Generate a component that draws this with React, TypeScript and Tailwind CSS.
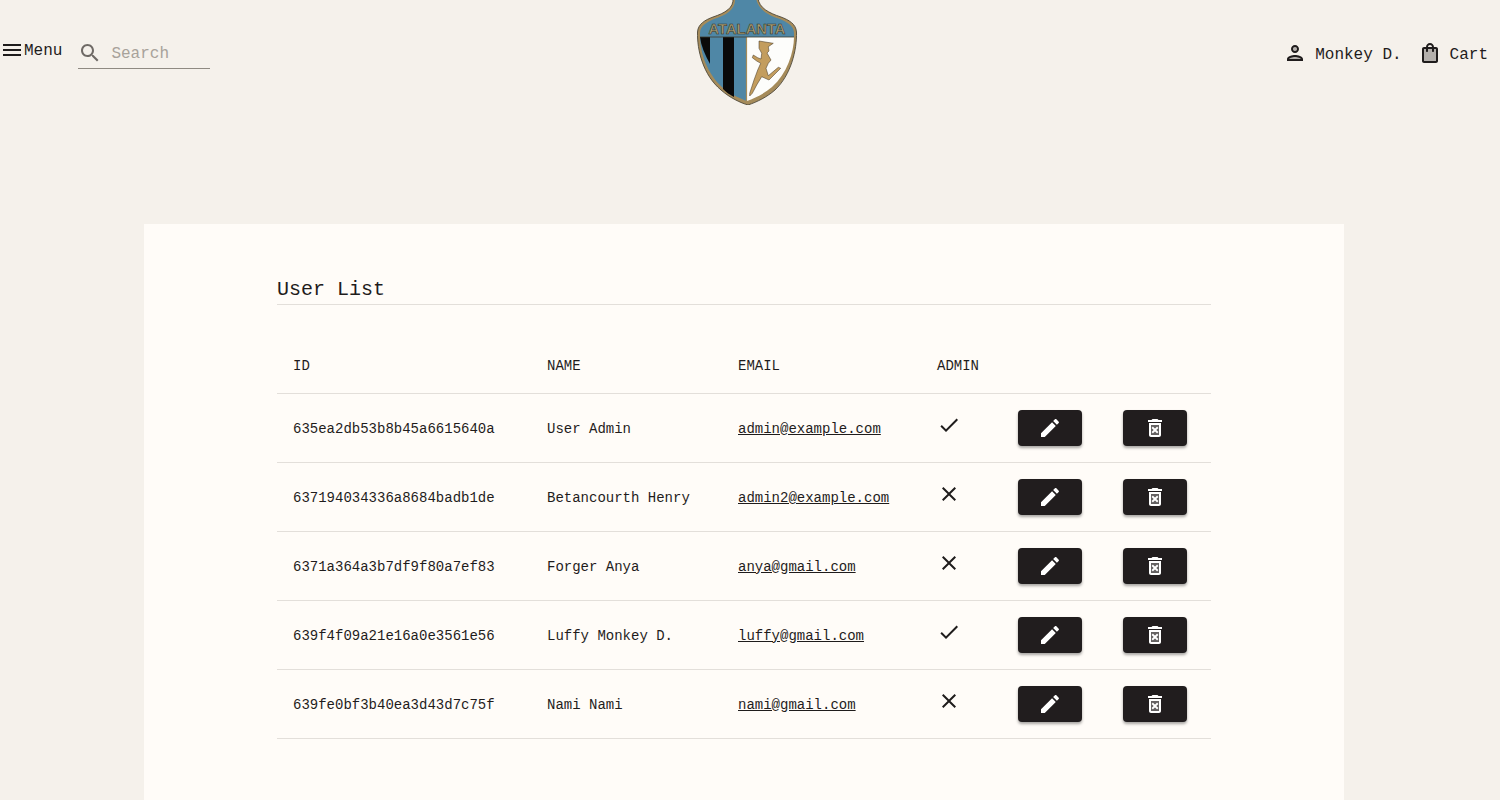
import React from 'react';

const font = 'font-["Liberation_Mono",monospace]';

const users = [
  { id: '635ea2db53b8b45a6615640a', name: 'User Admin', email: 'admin@example.com', admin: true },
  { id: '637194034336a8684badb1de', name: 'Betancourth Henry', email: 'admin2@example.com', admin: false },
  { id: '6371a364a3b7df9f80a7ef83', name: 'Forger Anya', email: 'anya@gmail.com', admin: false },
  { id: '639f4f09a21e16a0e3561e56', name: 'Luffy Monkey D.', email: 'luffy@gmail.com', admin: true },
  { id: '639fe0bf3b40ea3d43d7c75f', name: 'Nami Nami', email: 'nami@gmail.com', admin: false },
];

const Icon = ({ children, className }: { children: React.ReactNode; className?: string }) => (
  <svg viewBox="0 0 24 24" fill="currentColor" className={`w-6 h-6 shrink-0 block ${className ?? ''}`}>
    {children}
  </svg>
);

const Logo = () => (
  <svg viewBox="0 0 106 105" className="w-[106px] h-[105px] block">
    <path
      d="M36 -2C37 8 28 13 16 17C8 20 1 24 0.5 32C0 50 6 75 24 90C33 98 44 103 51 105C60 102 70 97 78 90C94 75 100 50 99.5 32C99 24 92 20 84 17C72 13 62 8 61 -2Z"
      fill="#a58b5a"
      stroke="#3f3a2c"
      strokeWidth="0.8"
    />
    <path
      d="M38 -2C39 9 30 15 17 19C10 22 3 26 3 33L3 37L97 37L97 33C97 26 90 22 83 19C70 15 61 9 59 -2Z"
      fill="#4f87a6"
    />
    <path d="M3 37H50V101C44 99 35 95 26 88C10 74 3 52 3 37Z" fill="#4f87a6" />
    <path d="M3 37H13V64C8 55 4 46 3 37Z" fill="#0a0a0a" />
    <path d="M26 37H37V97C33 95 29 92 26 89Z" fill="#0a0a0a" />
    <path d="M50 37H97C97 52 90 74 75 87C67 94 58 98 50 101Z" fill="#fdfdfb" />
    <path d="M49.5 37V102" stroke="#a58b5a" strokeWidth="1.2" />
    <path d="M3 37H97" stroke="#3f3a2c" strokeWidth="0.8" />
    <text
      x="50"
      y="33.5"
      textAnchor="middle"
      textLength="77"
      lengthAdjust="spacingAndGlyphs"
      fontSize="14"
      fontWeight="700"
      fontFamily="Liberation Sans, sans-serif"
      fill="#a89c72"
      stroke="#2e2e22"
      strokeWidth="0.5"
    >
      ATALANTA
    </text>
    <path
      d="M62 41L76.3 43.3L71.3 46.7L72 51L70 53L74 60L71.3 63.3L69 68.3L71.3 75.7L81.3 67.3L83.7 68.3L72 80L64.7 76.7L59.7 85L55.3 93.3L52.7 96L52.7 93.3L57 80L60.7 70L63.7 63.3L59.7 61L55.3 57.7L56.3 55L60.7 57.7L64 59L64.7 53.3L62 48.3Z"
      fill="#c39d5e"
      stroke="#3a2f1c"
      strokeWidth="0.5"
      strokeLinejoin="round"
    />
  </svg>
);

const borderCls = 'text-left text-sm font-normal border-b border-[#e3dfda]';
const headCls = `pl-4 pr-4 pt-[20px] pb-[16px] ${borderCls}`;
const textCls = `pl-4 pr-4 pt-[18px] pb-[16px] ${borderCls}`;
const cellCls = `p-4 ${borderCls}`;
const btnCls = 'w-16 h-9 rounded bg-[#211d1e] text-white flex items-center justify-center shadow-[0_2px_3px_rgba(0,0,0,0.35)]';

const App = () => (
  <div className={`min-h-screen bg-[#f5f1eb] text-[#1f1c1c] ${font}`}>
    <header className="grid grid-cols-[1fr_auto_1fr] h-[224px] items-start">
      <div className="flex items-start pt-[38px]">
        <div className="flex items-center">
          <Icon>
            <path d="M3 18h18v-2H3v2zm0-5h18v-2H3v2zm0-7v2h18V6H3z" />
          </Icon>
          <span className="text-base h-6 leading-[26px]">Menu</span>
        </div>
        <div className="ml-4 w-[132px] h-[31px] flex items-center border-b border-[#8f8a82]">
          <Icon className="text-[#6f6a66]">
            <path d="M15.5 14h-.79l-.28-.27C15.41 12.59 16 11.11 16 9.5 16 5.91 13.09 3 9.5 3S3 5.91 3 9.5 5.91 16 9.5 16c1.61 0 3.09-.59 4.23-1.57l.27.28v.79l5 4.99L20.49 19l-4.99-5zm-6 0C7.01 14 5 11.99 5 9.5S7.01 5 9.5 5 14 7.01 14 9.5 11.99 14 9.5 14z" />
          </Icon>
          <span className="ml-[9px] mt-[2px] text-base text-[#a8a29a]">Search</span>
        </div>
      </div>
      <Logo />
      <div className="flex items-center justify-end pr-3 pt-[41px] text-base">
        <Icon>
          <circle cx="12" cy="8" r="2" opacity="0.3" />
          <path d="M12 15c-2.7 0-6 1.4-6 3.2V19h12v-.8c0-1.8-3.3-3.2-6-3.2z" opacity="0.3" />
          <path d="M12 6c1.1 0 2 .9 2 2s-.9 2-2 2-2-.9-2-2 .9-2 2-2m0 10c2.7 0 5.8 1.29 6 2H6c.23-.72 3.31-2 6-2m0-12C9.79 4 8 5.79 8 8s1.79 4 4 4 4-1.79 4-4-1.79-4-4-4zm0 10c-2.67 0-8 1.34-8 4v2h16v-2c0-2.66-5.33-4-8-4z" />
        </Icon>
        <span className="ml-2 h-6 leading-[28px]">Monkey D.</span>
        <Icon className="ml-4">
          <path d="M6 8h12v12H6z" opacity="0.3" />
          <path d="M18 6h-2c0-2.21-1.79-4-4-4S8 3.79 8 6H6c-1.1 0-2 .9-2 2v12c0 1.1.9 2 2 2h12c1.1 0 2-.9 2-2V8c0-1.1-.9-2-2-2zm-6-2c1.1 0 2 .9 2 2h-4c0-1.1.9-2 2-2zm6 16H6V8h2v2c0 .55.45 1 1 1s1-.45 1-1V8h4v2c0 .55.45 1 1 1s1-.45 1-1V8h2v12z" />
        </Icon>
        <span className="ml-2 h-6 leading-[28px]">Cart</span>
      </div>
    </header>

    <main className="ml-[144px] w-[1200px] bg-[#fffcf8] pt-[52px] pb-[61px] px-[133px]">
      <h1 className="text-xl leading-7 border-b border-[#e3dfda]">User List</h1>
      <table className="w-full table-fixed border-collapse mt-[31px]">
        <colgroup>
          <col className="w-[254px]" />
          <col className="w-[191px]" />
          <col className="w-[199px]" />
          <col className="w-[81px]" />
          <col className="w-[105px]" />
          <col className="w-[104px]" />
        </colgroup>
        <thead>
          <tr className="h-[57px]">
            <th className={headCls}>ID</th>
            <th className={headCls}>NAME</th>
            <th className={headCls}>EMAIL</th>
            <th className={headCls}>ADMIN</th>
            <th className={headCls}></th>
            <th className={headCls}></th>
          </tr>
        </thead>
        <tbody>
          {users.map(u => (
            <tr key={u.id}>
              <td className={textCls}>{u.id}</td>
              <td className={textCls}>{u.name}</td>
              <td className={textCls}>
                <a className="underline">{u.email}</a>
              </td>
              <td className={cellCls}>
                <Icon className="mb-[6px]">
                  {u.admin ? (
                    <path d="M9 16.17L4.83 12l-1.42 1.41L9 19 21 7l-1.41-1.41z" />
                  ) : (
                    <path d="M19 6.41L17.59 5 12 10.59 6.41 5 5 6.41 10.59 12 5 17.59 6.41 19 12 13.41 17.59 19 19 17.59 13.41 12z" />
                  )}
                </Icon>
              </td>
              <td className={cellCls}>
                <button className={btnCls}>
                  <Icon>
                    <path d="M3 17.25V21h3.75L17.81 9.94l-3.75-3.75L3 17.25zM20.71 7.04c.39-.39.39-1.02 0-1.41l-2.34-2.34c-.39-.39-1.02-.39-1.41 0l-1.83 1.83 3.75 3.75 1.83-1.83z" />
                  </Icon>
                </button>
              </td>
              <td className={cellCls}>
                <button className={btnCls}>
                  <Icon>
                    <path d="M16 9H8v10h8V9zm-.47 7.12l-1.41 1.41L12 15.41l-2.12 2.12-1.41-1.41L10.59 14l-2.13-2.12 1.41-1.41L12 12.59l2.12-2.12 1.41 1.41L13.41 14l2.12 2.12z" opacity="0.3" />
                    <path d="M14.12 10.47L12 12.59l-2.13-2.12-1.41 1.41L10.59 14l-2.12 2.12 1.41 1.41L12 15.41l2.12 2.12 1.41-1.41L13.41 14l2.12-2.12zM15.5 4l-1-1h-5l-1 1H5v2h14V4zM6 19c0 1.1.9 2 2 2h8c1.1 0 2-.9 2-2V7H6v12zM8 9h8v10H8V9z" />
                  </Icon>
                </button>
              </td>
            </tr>
          ))}
        </tbody>
      </table>
    </main>
  </div>
);

export default App;
